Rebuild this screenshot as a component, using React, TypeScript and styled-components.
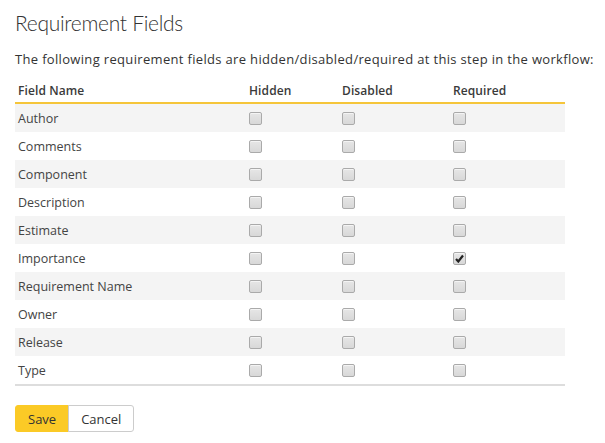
import styled, { createGlobalStyle } from "styled-components";

const GlobalStyle = createGlobalStyle`
  body {
    margin: 0;
    background: #fff;
    font-family: "Open Sans", "Noto Sans", sans-serif;
    color: #333;
  }
`;

const Page = styled.div`
  padding: 8px 15px 0 15px;
  width: 605px;
  box-sizing: border-box;
`;

const Title = styled.h1`
  margin: 0;
  font-family: Lato, sans-serif;
  font-weight: 300;
  font-size: 21px;
  line-height: 30px;
  color: #333;
  letter-spacing: -0.3px;
`;

const Intro = styled.p`
  margin: 12px 0 0 0;
  font-size: 13px;
  line-height: 18px;
  letter-spacing: 0.33px;
  white-space: nowrap;
  color: #333;
`;

const Table = styled.div`
  margin-top: 11px;
  width: 550px;
  border-bottom: 2px solid #ddd;
`;

const Row = styled.div<{ $shaded?: boolean; $head?: boolean }>`
  display: grid;
  grid-template-columns: 231px 93px 111px 1fr;
  align-items: center;
  height: ${(p) => (p.$head ? "23px" : "28px")};
  background: ${(p) => (p.$shaded ? "#f4f4f4" : "#fff")};
  border-bottom: ${(p) => (p.$head ? "2px solid #f5c53a" : "none")};
`;

const HeadCell = styled.div`
  padding-left: 3px;
  font-size: 12px;
  font-weight: 600;
  color: #3a3a3a;
  letter-spacing: 0.1px;
`;

const Cell = styled.div`
  padding-left: 3px;
  font-size: 12.5px;
  color: #444;
  display: flex;
  align-items: center;
`;

const Box = styled.span`
  width: 11px;
  height: 11px;
  border: 1px solid #aaa;
  border-radius: 2px;
  background: linear-gradient(#e6e6e6, #d8d8d8);
  box-shadow: inset 0 1px 0 #f4f4f4;
  display: flex;
  align-items: center;
  justify-content: center;
`;

const Buttons = styled.div`
  display: flex;
  margin-top: 19px;
`;

const Button = styled.button<{ $primary?: boolean }>`
  height: 27px;
  padding: 0 12px;
  font-family: "Open Sans", "Noto Sans", sans-serif;
  font-size: 13px;
  color: #333;
  cursor: pointer;
  background: ${(p) => (p.$primary ? "#fbca26" : "#fff")};
  border: 1px solid ${(p) => (p.$primary ? "#fbca26" : "#ccc")};
  border-radius: ${(p) => (p.$primary ? "3px 0 0 3px" : "0 3px 3px 0")};
  margin-left: ${(p) => (p.$primary ? "0" : "-1px")};
`;

const fields = [
  { name: "Author" },
  { name: "Comments" },
  { name: "Component" },
  { name: "Description" },
  { name: "Estimate" },
  { name: "Importance", required: true },
  { name: "Requirement Name" },
  { name: "Owner" },
  { name: "Release" },
  { name: "Type" },
];

const Check = ({ checked }: { checked?: boolean }) => (
  <Box>
    {checked && (
      <svg width="9" height="9" viewBox="0 0 9 9">
        <path d="M1 5 L3.3 7.5 L8 1.5" fill="none" stroke="#222" strokeWidth="2.2" />
      </svg>
    )}
  </Box>
);

export default function App() {
  return (
    <>
      <GlobalStyle />
      <Page>
        <Title>Requirement Fields</Title>
        <Intro>The following requirement fields are hidden/disabled/required at this step in the workflow:</Intro>
        <Table>
          <Row $head>
            <HeadCell>Field Name</HeadCell>
            <HeadCell>Hidden</HeadCell>
            <HeadCell>Disabled</HeadCell>
            <HeadCell>Required</HeadCell>
          </Row>
          {fields.map((f, i) => (
            <Row key={f.name} $shaded={i % 2 === 0}>
              <Cell>{f.name}</Cell>
              <Cell>
                <Check />
              </Cell>
              <Cell>
                <Check />
              </Cell>
              <Cell>
                <Check checked={f.required} />
              </Cell>
            </Row>
          ))}
        </Table>
        <Buttons>
          <Button $primary>Save</Button>
          <Button>Cancel</Button>
        </Buttons>
      </Page>
    </>
  );
}
